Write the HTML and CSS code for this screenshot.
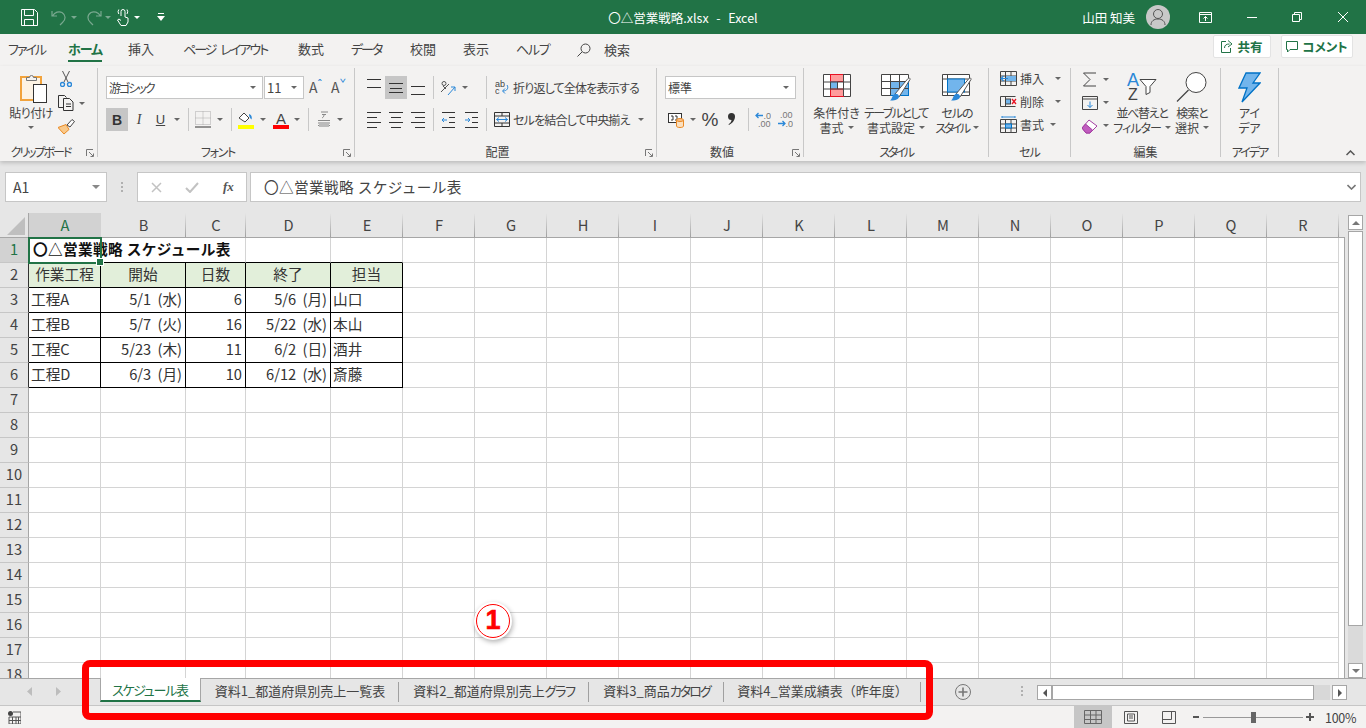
FILE: index.html
```html
<!DOCTYPE html>
<html lang="ja">
<head>
<meta charset="utf-8">
<title>〇△営業戦略.xlsx - Excel</title>
<link rel="stylesheet" href="styles.css">
</head>
<body>
<div class="app">

<header class="title">
  <div class="qat">
    <svg width="17" height="17" viewBox="0 0 17 17" fill="none" stroke="#fff"><path d="M.5.500h13l3 3v13H.5z"/><path d="M3.500.5v6h9v-6M3.500 16.500v-6h9v6"/></svg>
    <svg class="q1" width="17" height="17" viewBox="0 0 17 17" fill="none" stroke="#79a88f" stroke-width="1.200"><path d="M1 2v5h5M1.500 7C4 3 8 2 11 3.500c4 2.500 4 7 .5 10L9 16"/></svg>
    <i class="caret dim q2"></i>
    <svg class="q3" width="17" height="17" viewBox="0 0 17 17" fill="none" stroke="#79a88f" stroke-width="1.200"><path d="M16 2v5h-5M15.500 7C13 3 9 2 6 3.500c-4 2.500-4 7-.5 10L8 16"/></svg>
    <i class="caret dim q2"></i>
    <svg class="q4" width="13" height="18" viewBox="0 0 13 18" fill="none" stroke="#fff"><path d="M5 8V3.500a2 2 0 0 1 4 0V9l3 1v4l-2 3.500H5L1.500 12 3 11l2 1.500"/><path d="M2.800 6a4 4 0 0 1 0-4.500M11 6a4 4 0 0 0 0-4.500"/></svg>
    <i class="caret wh q5"></i>
    <svg class="q6" width="8" height="8" viewBox="0 0 8 8"><path d="M1 0h6v1H1zM0 3h8L4 8z" fill="#fff"/></svg>
  </div>
  <div class="doc">〇△営業戦略.xlsx  -  Excel</div>
  <div class="win">
    <span class="user">山田 知美</span>
    <span class="avatar"><svg width="16" height="18" viewBox="0 0 16 18" fill="none" stroke="#555"><circle cx="8" cy="6" r="4.500"/><path d="M1 17c0-4 3-6 7-6s7 2 7 6"/></svg></span>
    <svg class="w1" width="13" height="11" viewBox="0 0 13 11" fill="none" stroke="#fff"><path d="M.5.500h12v10H.5zM.5 2.500h12M6.500 9V4.500M4.500 6.500l2-2 2 2"/></svg>
    <svg class="w2" width="10" height="1" viewBox="0 0 10 1"><path d="M0 0h10v1H0z" fill="#fff"/></svg>
    <svg class="w3" width="10" height="10" viewBox="0 0 10 10" fill="none" stroke="#fff"><path d="M.5 2.500h7v7h-7zM2.500 2.500v-2h7v7h-2"/></svg>
    <svg class="w4" width="10" height="10" viewBox="0 0 10 10" stroke="#fff"><path d="M0 0l10 10M10 0L0 10"/></svg>
  </div>
</header>

<nav class="tabs">
  <span class="tab t60 ls20">ファイル</span>
  <span class="tab t60 on ls10">ホーム</span>
  <span class="tab t55">挿入</span>
  <span class="tab t115 ls20">ページ レイアウト</span>
  <span class="tab t53">数式</span>
  <span class="tab t59 ls20">データ</span>
  <span class="tab t53">校閲</span>
  <span class="tab t53">表示</span>
  <span class="tab t61 ls13">ヘルプ</span>
  <span class="tab search"><svg width="14" height="14" viewBox="0 0 14 14" fill="none" stroke="#444"><circle cx="8.500" cy="5.500" r="4.500"/><path d="M5 9l-4.500 4.500"/></svg>検索</span>
  <span class="actions">
    <span class="act"><svg width="12" height="13" viewBox="0 0 12 13" fill="none" stroke="#217346"><path d="M5 1.500H.5v11h9V8"/><path d="M3.500 8c0-3 2-4 5-4M7 .5L11 4 7 7"/></svg>共有</span>
    <span class="act a2"><svg width="12" height="12" viewBox="0 0 12 12" fill="none" stroke="#217346"><path d="M.5.500h11v8H4L1.500 11V8.500h-1z"/></svg>コメント</span>
  </span>
</nav>

<section class="ribbon">

  <div class="group g-clip">
    <div class="gbody pad-clip">
      <div class="big w42">
        <div class="bigicon"><svg class="paste" width="28" height="32" viewBox="0 0 28 32"><rect x="1" y="5" width="20" height="23" fill="#fdf3e4" stroke="#f2a33c" stroke-width="2"/><path d="M6.500 8.500v-3h3a2 2 0 0 1 4 0h3v3z" fill="#f3f2f1" stroke="#777"/><rect x="13.500" y="12.500" width="13" height="18" fill="#fff" stroke="#333"/></svg></div>
        <span class="bl ls05">貼り付け</span>
        <span class="bl"><i class="caret"></i></span>
      </div>
      <div class="clipcol">
        <div class="c h16 w16"><svg width="12" height="16" viewBox="0 0 12 16" fill="none"><path d="M2.500 0l5.500 11M9.500 0L4 11" stroke="#555"/><circle cx="2.500" cy="13.500" r="2" stroke="#2b88d8" stroke-width="1.400"/><circle cx="9.500" cy="13.500" r="2" stroke="#2b88d8" stroke-width="1.400"/></svg></div>
        <div class="row h16"><svg width="17" height="16" viewBox="0 0 17 16" fill="none" stroke="#333"><path d="M5.500 12.500H.5V.5h6l2 2"/><path d="M5.500 3.500h6l3.500 3.500v8.500H5.500zM8 9h5M8 11.500h5"/></svg><i class="caret cm"></i></div>
        <div class="row h16"><svg width="17" height="16" viewBox="0 0 17 16"><path d="M0 8.500L8 5.500l3 5-5 4.500z" fill="#f9c98a" stroke="#ea8a24"/><path d="M9 6l5-5.500 2.500 2-4.500 5.500z" fill="#fff" stroke="#444"/></svg></div>
      </div>
    </div>
    <div class="glabel lb"><span class="ls20">クリップボード</span><svg class="launch" width="8" height="8" viewBox="0 0 8 8" fill="none" stroke="#777"><path d="M.5 7V.5H7M3 3l4 4M4.500 7.500h3v-3"/></svg></div>
  </div>

  <div class="group g-font">
    <div class="gbody pad-rows">
      <div class="row h23">
        <div class="sel w157"><span class="jp-y ls20">游ゴシック</span><i class="caret sc"></i></div>
        <div class="sel w40 ml1"><span>11</span><i class="caret sc"></i></div>
        <span class="grow-a ml5">A<sup>ˆ</sup></span>
        <span class="grow-a ml7">A<sup>ˇ</sup></span>
      </div>
      <div class="row h23 mt9">
        <div class="c w22 pressed bold-b">B</div>
        <div class="c w22 ital">I</div>
        <div class="c w21 under">U</div>
        <div class="c w12"><i class="caret"></i></div>
        <div class="vs w10"></div>
        <div class="c w20"><svg width="16" height="17" viewBox="0 0 16 17" fill="none" stroke="#aaa" stroke-dasharray="1 1"><path d="M.5.500h15v13H.5zM8 .5v13M.5 7h15"/><path d="M0 16h16" stroke="#333" stroke-dasharray="none"/></svg></div>
        <div class="c w14"><i class="caret"></i></div>
        <div class="vs w8"></div>
        <div class="c w22"><svg width="16" height="18" viewBox="0 0 16 18"><path d="M1 7l5-5 5 5-4 4z" fill="#fff" stroke="#444"/><path d="M11 3c3 1 3 4 2.500 5.500C12 7 11 6 11 3z" fill="#2b88d8"/><rect y="14" width="16" height="4" fill="#ffff00"/></svg></div>
        <div class="c w12"><i class="caret"></i></div>
        <div class="c w24 font-a">A</div>
        <div class="c w8"><i class="caret"></i></div>
        <div class="vs w14"></div>
        <div class="c w18"><svg width="14" height="17" viewBox="0 0 14 17" fill="none" stroke="#888"><path d="M4 1h7M5 3.500h4M7 3.500c0 2-1 3-2 3.500M1 9.500h12M1 12h12M1 14.500h12"/><rect x="2" y="11" width="10" height="5" fill="#bbb" stroke="none"/></svg></div>
        <div class="c w14"><i class="caret"></i></div>
      </div>
    </div>
    <div class="glabel lb"><span class="ls13">フォント</span><svg class="launch" width="8" height="8" viewBox="0 0 8 8" fill="none" stroke="#777"><path d="M.5 7V.5H7M3 3l4 4M4.500 7.500h3v-3"/></svg></div>
  </div>

  <div class="group g-align">
    <div class="gbody pad-rows">
      <div class="row h23">
        <div class="c w22 at"><svg width="14" height="9" viewBox="0 0 14 9"><path d="M0 0h14v1H0zM0 8h14v1H0z" fill="#333"/></svg></div>
        <div class="c w22 pressed"><svg width="14" height="10" viewBox="0 0 14 10"><path d="M0 0h14v1H0zM1 5h12v1H1zM0 9h14v1H0z" fill="#333"/></svg></div>
        <div class="c w22 ab"><svg width="14" height="9" viewBox="0 0 14 9"><path d="M0 0h14v1H0zM0 8h14v1H0z" fill="#333"/></svg></div>
        <div class="vs w8"></div>
        <div class="c w22"><svg width="16" height="16" viewBox="0 0 16 16" fill="none"><path d="M1 12l8-8M3 6l3 3" stroke="#555"/><circle cx="4" cy="3.500" r="2" stroke="#555"/><path d="M8 15l7-8M11 7h4v4" stroke="#2b88d8"/></svg></div>
        <div class="c w12"><i class="caret"></i></div>
        <div class="w11"></div>
        <div class="vs w8"></div>
        <div class="c w23"><svg width="14" height="15" viewBox="0 0 14 15"><text x="0" y="6.500" class="ti">ab</text><text x="0" y="14" class="ti">c</text><path d="M12 5c2 3 0 6-4 6M10 8.500l-2.500 2.500 2.500 2.500" fill="none" stroke="#2b88d8"/></svg></div>
        <span class="rt ls08">折り返して全体を表示する</span>
      </div>
      <div class="row h23 mt9">
        <div class="c w22"><svg width="14" height="16" viewBox="0 0 14 16"><path d="M0 0h14v1H0zM0 5h10v1H0zM0 10h14v1H0zM0 15h10v1H0z" fill="#333"/></svg></div>
        <div class="c w22"><svg width="14" height="16" viewBox="0 0 14 16"><path d="M0 0h14v1H0zM2 5h10v1H2zM0 10h14v1H0zM2 15h10v1H2z" fill="#333"/></svg></div>
        <div class="c w22"><svg width="14" height="16" viewBox="0 0 14 16"><path d="M0 0h14v1H0zM4 5h10v1H4zM0 10h14v1H0zM4 15h10v1H4z" fill="#333"/></svg></div>
        <div class="vs w8"></div>
        <div class="c w22"><svg width="14" height="16" viewBox="0 0 14 16"><path d="M1 0h13v1H1zM8 5h6v1H8zM8 10h6v1H8zM1 15h13v1H1z" fill="#333"/><path d="M6 8H1M3 6L1 8l2 2" fill="none" stroke="#2b88d8"/></svg></div>
        <div class="c w23"><svg width="14" height="16" viewBox="0 0 14 16"><path d="M1 0h13v1H1zM8 5h6v1H8zM8 10h6v1H8zM1 15h13v1H1z" fill="#333"/><path d="M1 8h5M4 6l2 2-2 2" fill="none" stroke="#2b88d8"/></svg></div>
        <div class="vs w8"></div>
        <div class="c w23"><svg width="16" height="15" viewBox="0 0 16 15" fill="none"><path d="M.5.500h15v14H.5zM.5 4h15M.5 11h15M8 .5V4M8 11v3.500" stroke="#333"/><path d="M2.500 7.500h11M5 5.500l-2.500 2 2.500 2M11 5.500l2.500 2-2.500 2" stroke="#2b88d8"/></svg></div>
        <span class="rt ls08">セルを結合して中央揃え</span>
        <i class="caret ml8"></i>
      </div>
    </div>
    <div class="glabel lb">配置<svg class="launch" width="8" height="8" viewBox="0 0 8 8" fill="none" stroke="#777"><path d="M.5 7V.5H7M3 3l4 4M4.500 7.500h3v-3"/></svg></div>
  </div>

  <div class="group g-num">
    <div class="gbody pad-rows">
      <div class="row h23">
        <div class="sel w131"><span class="jp-y">標準</span><i class="caret sc"></i></div>
      </div>
      <div class="row h23 mt9">
        <div class="c w22"><svg width="17" height="17" viewBox="0 0 17 17"><rect x=".5" y="2.500" width="13" height="9" fill="#fff" stroke="#333"/><path d="M3 5h2v4H3M7 5h2v4H7" fill="none" stroke="#333"/><path d="M8.500 9v6c0 2 7 2 7 0V9" fill="#fbe0c0" stroke="#ea8a24"/><ellipse cx="12" cy="9" rx="3.500" ry="1.500" fill="#f7c08a" stroke="#ea8a24"/></svg></div>
        <div class="c w12"><i class="caret"></i></div>
        <div class="c w22 pct">%</div>
        <div class="c w20"><svg width="9" height="13" viewBox="0 0 9 13"><path d="M1 3.500a3.500 3.500 0 1 1 7 0c0 4-3 7-6 8.500l-.5-.8c2-1.200 3-2.700 3-4.200A3.500 3.500 0 0 1 1 3.500z" fill="#333"/></svg></div>
        <div class="vs w14"></div>
        <div class="c w16"><svg width="16" height="17" viewBox="0 0 16 17"><path d="M8 4.500H1M3.500 2L1 4.500 3.500 7" fill="none" stroke="#2b88d8" stroke-width="1.300"/><text x="8.500" y="8" class="tn">.0</text><text x="3" y="16" class="tn">.00</text></svg></div>
        <div class="w6"></div>
        <div class="c w16"><svg width="16" height="17" viewBox="0 0 16 17"><text x="3" y="7" class="tn">.00</text><path d="M1 12.500h7M5.500 10L8 12.500 5.500 15" fill="none" stroke="#2b88d8" stroke-width="1.300"/><text x="8.500" y="16" class="tn">.0</text></svg></div>
      </div>
    </div>
    <div class="glabel lb">数値<svg class="launch" width="8" height="8" viewBox="0 0 8 8" fill="none" stroke="#777"><path d="M.5 7V.5H7M3 3l4 4M4.500 7.500h3v-3"/></svg></div>
  </div>

  <div class="group g-style">
    <div class="gbody pad-style">
      <div class="big w49">
        <div class="bigicon"><svg class="low" width="28" height="23" viewBox="0 0 28 23" fill="none"><path d="M.5.500h27v22H.5z" fill="#fff" stroke="#444"/><rect x="7.500" y=".5" width="13" height="7" fill="#ff9c9c" stroke="#e81123"/><rect x="7.500" y="7.500" width="7" height="7" fill="#72b5ec"/><rect x="7.500" y="15" width="13" height="7.500" fill="#ff9c9c" stroke="#e81123"/><path d="M7.500 8v7M.5 8h27M.5 15h27M14.500 8v7M20.500 0v22" stroke="#444"/></svg></div>
        <span class="bl">条件付き</span>
        <span class="bl">書式<i class="caret cl"></i></span>
      </div>
      <div class="big w70">
        <div class="bigicon"><svg class="low" width="30" height="27" viewBox="0 0 30 27" fill="none"><path d="M.5.500h27v21H.5z" fill="#fff" stroke="#444"/><rect x="9.500" y="7.500" width="18" height="14" fill="#72b5ec" stroke="#0072c6"/><path d="M.5 7.500h27M.5 14.500h27M9.500.5v21M18.500.5v21" stroke="#444"/><path d="M14 20L27 4.500c1-1 2.500-.2 2 1L18 23z" fill="#fff" stroke="#555"/><path d="M9 26.500c2-1 2-5 4.500-6.500 2-1 4.500.5 4.500 2.500 0 3-5 4.500-9 4z" fill="#2b88d8"/></svg></div>
        <span class="bl ls16">テーブルとして</span>
        <span class="bl">書式設定<i class="caret cl"></i></span>
      </div>
      <div class="big w52">
        <div class="bigicon"><svg class="low" width="30" height="27" viewBox="0 0 30 27" fill="none"><path d="M.5.500h27v21H.5z" fill="#fff" stroke="#444"/><path d="M.5 5h27M.5 18h27M5.500.5v21" stroke="#444"/><rect x="5.500" y="5" width="17" height="13" fill="#72b5ec" stroke="#0072c6"/><path d="M14 20L27 4.500c1-1 2.500-.2 2 1L18 23z" fill="#fff" stroke="#555"/><path d="M9 26.500c2-1 2-5 4.500-6.500 2-1 4.500.5 4.500 2.500 0 3-5 4.500-9 4z" fill="#2b88d8"/></svg></div>
        <span class="bl ls10">セルの</span>
        <span class="bl"><span class="ls25">スタイル</span><i class="caret cl"></i></span>
      </div>
    </div>
    <div class="glabel"><span class="ls25">スタイル</span></div>
  </div>

  <div class="group g-cell">
    <div class="gbody pad-cell">
      <div class="row h23"><svg width="17" height="15" viewBox="0 0 17 15" fill="none"><path d="M.5.500h16v14H.5zM.5 5h16M.5 10h16M5.500.5v14M11 .5v14" stroke="#444"/><rect x="6" y="5" width="10" height="5" fill="#72b5ec"/><path d="M8 7.500H1M3.500 5L1 7.500 3.500 10" stroke="#2b88d8" stroke-width="1.200"/></svg><span class="ct">挿入</span><i class="caret ml6"></i></div>
      <div class="row h23"><svg width="17" height="15" viewBox="0 0 17 15" fill="none"><path d="M.5 2.500h15M.5 12.500h15M5.500 2.500v10M.5 2.500v10" stroke="#444"/><rect x="5.500" y="5" width="5" height="5" fill="#72b5ec" stroke="#444"/><path d="M12 5l4 5M16 5l-4 5" stroke="#e81123" stroke-width="1.300"/></svg><span class="ct">削除</span><i class="caret ml6"></i></div>
      <div class="row h23"><svg width="17" height="17" viewBox="0 0 17 17" fill="none"><path d="M.5 3.500h16v13H.5zM.5 8h16M.5 12h16M5.500 3.500v13M11 3.500v13" stroke="#444"/><rect x="5.500" y="8" width="6" height="4" fill="#72b5ec" stroke="#0072c6"/><path d="M2 1h13M2 0v2M15 0v2" stroke="#2b88d8"/></svg><span class="ct">書式</span><i class="caret ml1"></i></div>
    </div>
    <div class="glabel"><span class="ls10">セル</span></div>
  </div>

  <div class="group g-edit">
    <div class="gbody pad-edit">
      <div class="editcol">
        <div class="row h23"><svg width="16" height="15" viewBox="0 0 16 15" fill="none" stroke="#444"><path d="M14 1H1.500L8 7.500 1.500 14H14"/></svg><i class="caret ml5"></i></div>
        <div class="row h23"><svg width="16" height="16" viewBox="0 0 16 16" fill="none"><path d="M.5 1.500h15v13H.5z" stroke="#444"/><path d="M.5 4h15" stroke="#444"/><path d="M8 6.500v6M5.500 10L8 12.500 10.500 10" stroke="#2b88d8"/></svg><i class="caret ml5"></i></div>
        <div class="row h23"><svg width="16" height="16" viewBox="0 0 16 16"><path d="M0 10l7-8 8 6-7 7H4z" fill="#fff" stroke="#a33ea1"/><path d="M0 10l3.500-4 7 6L8 15H4z" fill="#c15cbf" stroke="#a33ea1"/></svg><i class="caret ml5"></i></div>
      </div>
      <div class="big w56">
        <div class="bigicon"><svg class="sorticon" width="30" height="31" viewBox="0 0 30 31" fill="none"><text x="0" y="14" class="ta">A</text><text x="1" y="28" class="tz">Z</text><path d="M13 7.500h16l-6 7v6l-4 2v-8z" fill="#fff" stroke="#444"/></svg></div>
        <span class="bl ls13">並べ替えと</span>
        <span class="bl"><span class="ls10">フィルター</span><i class="caret cl"></i></span>
      </div>
      <div class="big w44">
        <div class="bigicon"><svg width="32" height="31" viewBox="0 0 32 31" fill="none" stroke="#444"><circle cx="20" cy="10.500" r="10" fill="#fff"/><path d="M12.500 18L1 29.500" stroke-width="1.200"/></svg></div>
        <span class="bl ls10">検索と</span>
        <span class="bl">選択<i class="caret cl"></i></span>
      </div>
    </div>
    <div class="glabel">編集</div>
  </div>

  <div class="group g-idea">
    <div class="gbody pad-idea">
      <div class="big w57">
        <div class="bigicon"><svg width="23" height="31" viewBox="0 0 23 31"><path d="M8 1h14l-7 10h7L4 30l5-14H1z" fill="#72b5ec" stroke="#0072c6" stroke-width="1.300"/></svg></div>
        <span class="bl">アイ</span>
        <span class="bl">デア</span>
      </div>
    </div>
    <div class="glabel"><span class="ls20">アイデア</span></div>
  </div>

  <svg class="collapse" width="9" height="6" viewBox="0 0 9 6" fill="none" stroke="#555" stroke-width="1.500"><path d="M.5 5l4-4 4 4"/></svg>
</section>

<div class="fbar">
  <div class="namebox"><span>A1</span><i class="caret sc big-caret"></i></div>
  <div class="grip"></div>
  <div class="fxbtns">
    <svg width="11" height="11" viewBox="0 0 11 11" stroke="#c2c2c2" stroke-width="1.500"><path d="M1 1l9 9M10 1l-9 9"/></svg>
    <svg width="14" height="11" viewBox="0 0 14 11" fill="none" stroke="#c2c2c2" stroke-width="2"><path d="M1 6l4 4 8-9"/></svg>
    <span class="fx">fx</span>
  </div>
  <div class="formula"><span class="ftext">〇△営業戦略 スケジュール表</span><svg width="9" height="6" viewBox="0 0 9 6" fill="none" stroke="#777" stroke-width="1.600"><path d="M.5 1l4 4 4-4"/></svg></div>
</div>

<main class="sheet">
  <div class="gridwrap">
    <table class="grid">
      <colgroup>
        <col class="c-rh"><col class="c72"><col class="c85"><col class="c60"><col class="c85"><col class="c72">
        <col class="c72"><col class="c72"><col class="c72"><col class="c72"><col class="c72"><col class="c72"><col class="c72"><col class="c72"><col class="c72"><col class="c72"><col class="c72"><col class="c72"><col class="c72"><col class="c-end">
      </colgroup>
      <thead>
        <tr><th class="corner"><svg width="18" height="18" viewBox="0 0 18 18"><path d="M18 0v18H0z" fill="#bfbfbf"/></svg></th><th class="act-h">A</th><th>B</th><th>C</th><th>D</th><th>E</th><th>F</th><th>G</th><th>H</th><th>I</th><th>J</th><th>K</th><th>L</th><th>M</th><th>N</th><th>O</th><th>P</th><th>Q</th><th>R</th><th class="end"></th></tr>
      </thead>
      <tbody>
        <tr><th class="rh act-r">1</th><td class="titlecell" colspan="3"><span class="selbox"></span>〇△営業戦略 スケジュール表</td><td class="bb"></td><td class="bb"></td><td></td><td></td><td></td><td></td><td></td><td></td><td></td><td></td><td></td><td></td><td></td><td></td><td></td><td class="end"></td></tr>
        <tr><th class="rh bk">2</th><td class="bx hd">作業工程</td><td class="bx hd">開始</td><td class="bx hd">日数</td><td class="bx hd">終了</td><td class="bx hd">担当</td><td></td><td></td><td></td><td></td><td></td><td></td><td></td><td></td><td></td><td></td><td></td><td></td><td></td><td class="end"></td></tr>
        <tr><th class="rh bk">3</th><td class="bx">工程A</td><td class="bx num">5/1 (水)</td><td class="bx num">6</td><td class="bx num">5/6 (月)</td><td class="bx">山口</td><td></td><td></td><td></td><td></td><td></td><td></td><td></td><td></td><td></td><td></td><td></td><td></td><td></td><td class="end"></td></tr>
        <tr><th class="rh bk">4</th><td class="bx">工程B</td><td class="bx num">5/7 (火)</td><td class="bx num">16</td><td class="bx num">5/22 (水)</td><td class="bx">本山</td><td></td><td></td><td></td><td></td><td></td><td></td><td></td><td></td><td></td><td></td><td></td><td></td><td></td><td class="end"></td></tr>
        <tr><th class="rh bk">5</th><td class="bx">工程C</td><td class="bx num">5/23 (木)</td><td class="bx num">11</td><td class="bx num">6/2 (日)</td><td class="bx">酒井</td><td></td><td></td><td></td><td></td><td></td><td></td><td></td><td></td><td></td><td></td><td></td><td></td><td></td><td class="end"></td></tr>
        <tr><th class="rh bk">6</th><td class="bx">工程D</td><td class="bx num">6/3 (月)</td><td class="bx num">10</td><td class="bx num">6/12 (水)</td><td class="bx">斎藤</td><td></td><td></td><td></td><td></td><td></td><td></td><td></td><td></td><td></td><td></td><td></td><td></td><td></td><td class="end"></td></tr>
        <tr><th class="rh">7</th><td></td><td></td><td></td><td></td><td></td><td></td><td></td><td></td><td></td><td></td><td></td><td></td><td></td><td></td><td></td><td></td><td></td><td></td><td class="end"></td></tr>
        <tr><th class="rh">8</th><td></td><td></td><td></td><td></td><td></td><td></td><td></td><td></td><td></td><td></td><td></td><td></td><td></td><td></td><td></td><td></td><td></td><td></td><td class="end"></td></tr>
        <tr><th class="rh">9</th><td></td><td></td><td></td><td></td><td></td><td></td><td></td><td></td><td></td><td></td><td></td><td></td><td></td><td></td><td></td><td></td><td></td><td></td><td class="end"></td></tr>
        <tr><th class="rh">10</th><td></td><td></td><td></td><td></td><td></td><td></td><td></td><td></td><td></td><td></td><td></td><td></td><td></td><td></td><td></td><td></td><td></td><td></td><td class="end"></td></tr>
        <tr><th class="rh">11</th><td></td><td></td><td></td><td></td><td></td><td></td><td></td><td></td><td></td><td></td><td></td><td></td><td></td><td></td><td></td><td></td><td></td><td></td><td class="end"></td></tr>
        <tr><th class="rh">12</th><td></td><td></td><td></td><td></td><td></td><td></td><td></td><td></td><td></td><td></td><td></td><td></td><td></td><td></td><td></td><td></td><td></td><td></td><td class="end"></td></tr>
        <tr><th class="rh">13</th><td></td><td></td><td></td><td></td><td></td><td></td><td></td><td></td><td></td><td></td><td></td><td></td><td></td><td></td><td></td><td></td><td></td><td></td><td class="end"></td></tr>
        <tr><th class="rh">14</th><td></td><td></td><td></td><td></td><td></td><td></td><td></td><td></td><td></td><td></td><td></td><td></td><td></td><td></td><td></td><td></td><td></td><td></td><td class="end"></td></tr>
        <tr><th class="rh">15</th><td></td><td></td><td></td><td></td><td></td><td></td><td></td><td></td><td></td><td></td><td></td><td></td><td></td><td></td><td></td><td></td><td></td><td></td><td class="end"></td></tr>
        <tr><th class="rh">16</th><td></td><td></td><td></td><td></td><td></td><td></td><td></td><td></td><td></td><td></td><td></td><td></td><td></td><td></td><td></td><td></td><td></td><td></td><td class="end"></td></tr>
        <tr><th class="rh">17</th><td></td><td></td><td></td><td></td><td></td><td></td><td></td><td></td><td></td><td></td><td></td><td></td><td></td><td></td><td></td><td></td><td></td><td></td><td class="end"></td></tr>
        <tr><th class="rh">18</th><td></td><td></td><td></td><td></td><td></td><td></td><td></td><td></td><td></td><td></td><td></td><td></td><td></td><td></td><td></td><td></td><td></td><td></td><td class="end"></td></tr>
      </tbody>
    </table>
  </div>
  <div class="vscroll">
    <div class="sbtn"><svg width="8" height="4" viewBox="0 0 8 4"><path d="M4 0l4 4H0z" fill="#777"/></svg></div>
    <div class="vthumb"></div>
    <div class="vtrack"></div>
    <div class="sbtn"><svg width="8" height="4" viewBox="0 0 8 4"><path d="M0 0h8L4 4z" fill="#777"/></svg></div>
  </div>
</main>

<div class="tabbar">
  <div class="nav"><svg width="5" height="9" viewBox="0 0 5 9"><path d="M5 0v9L0 4.500z" fill="#bdbdbd"/></svg><svg width="5" height="9" viewBox="0 0 5 9"><path d="M0 0v9l5-4.500z" fill="#bdbdbd"/></svg></div>
  <div class="stab active"><span class="ls13">スケジュール</span>表</div>
  <div class="stab s1">資料1_都道府県別売上一覧表</div>
  <div class="stab s2">資料2_都道府県別売上<span class="ls13">グラフ</span></div>
  <div class="stab s3">資料3_商品<span class="ls20">カタログ</span></div>
  <div class="stab s4">資料4_営業成績表<span class="fullw">（</span>昨年度<span class="fullw">）</span></div>
  <svg class="addsheet" width="16" height="16" viewBox="0 0 16 16" fill="none" stroke="#777"><circle cx="8" cy="8" r="7.500"/><path d="M8 3.500v9M3.500 8h9" stroke-width="1.600"/></svg>
  <div class="grip g2"></div>
  <div class="hscroll">
    <div class="hbtn"><svg width="4" height="8" viewBox="0 0 4 8"><path d="M4 0v8L0 4z" fill="#555"/></svg></div>
    <div class="hthumb"></div>
    <div class="htrack"></div>
    <div class="hbtn"><svg width="4" height="8" viewBox="0 0 4 8"><path d="M0 0v8l4-4z" fill="#555"/></svg></div>
  </div>
</div>

<footer class="status">
  <svg class="macro" width="13" height="13" viewBox="0 0 13 13"><circle cx="2.500" cy="2.500" r="2.500" fill="#444"/><path d="M5 1h8v12H1V6h12M1 9.500h12M4.500 6v7M8 6v7M10.500 6v7" fill="none" stroke="#555"/></svg>
  <div class="views">
    <div class="view on"><svg width="18" height="14" viewBox="0 0 18 14" fill="none" stroke="#666"><path d="M.5.500h17v13H.5zM.5 5h17M.5 9.500h17M6.500.5v13M12 .5v13"/></svg></div>
    <div class="view"><svg width="14" height="13" viewBox="0 0 14 13" fill="none" stroke="#555"><path d="M.5.500h13v12H.5zM3.500 3h7v7h-7zM5 5h4M5 7h4"/></svg></div>
    <div class="view"><svg width="14" height="13" viewBox="0 0 14 13" fill="none" stroke="#555"><path d="M.5.500h13v12H.5zM.5 8.500h9V.5"/></svg></div>
  </div>
  <div class="zoom">
    <svg width="6" height="2" viewBox="0 0 6 2"><path d="M0 0h6v2H0z" fill="#555"/></svg>
    <div class="slider"><span class="knob"></span></div>
    <svg width="8" height="8" viewBox="0 0 8 8"><path d="M3 0h2v3h3v2H5v3H3V5H0V3h3z" fill="#555"/></svg>
    <span class="zv">100%</span>
  </div>
</footer>

<div class="redbox"></div>
<div class="callout"><span>1</span></div>
</div>
</body>
</html>
```

FILE: styles.css
```css
* { box-sizing: border-box; }
html, body { margin: 0; padding: 0; }
body { font-family: "Noto Sans CJK JP", "Noto Sans", sans-serif; color: #444; }
.app { position: relative; width: 1366px; height: 728px; overflow: hidden; display: flex; flex-direction: column; background: #e6e6e6; }
svg { display: block; flex: none; }
i.caret { display: inline-block; flex: none; width: 0; height: 0; border-left: 3px solid transparent; border-right: 3px solid transparent; border-top: 3px solid #666; }

.ls05 { letter-spacing: -.5px; } .ls08 { letter-spacing: -.8px; } .ls10 { letter-spacing: -1px; } .ls13 { letter-spacing: -1.3px; }
.ls16 { letter-spacing: -1.6px; } .ls20 { letter-spacing: -2px; } .ls25 { letter-spacing: -2.5px; }

/* title */
.title { height: 34px; flex: none; background: #217346; color: #fff; display: grid; grid-template-columns: 1fr auto 1fr; align-items: center; font-size: 12.5px; }
.qat { display: flex; align-items: center; padding-left: 21px; }
.q1 { margin-left: 13px; }
.q2 { margin-left: 3px; }
.q3 { margin-left: 8px; }
.q4 { margin-left: 5px; }
.q5 { margin-left: 5px; }
.q6 { margin-left: 17px; }
i.caret.dim { border-top-color: #79a88f; }
i.caret.wh { border-top-color: #fff; }
.doc { white-space: pre; font-feature-settings: "palt"; word-spacing: 1px; }
.win { display: flex; align-items: center; justify-content: flex-end; padding-right: 18px; }
.user { font-size: 12.5px; margin-right: 11px; font-feature-settings: "palt"; }
.avatar { width: 24px; height: 24px; border-radius: 50%; background: #c8c8c8; display: flex; align-items: center; justify-content: center; }
.w1 { margin-left: 29px; }
.w2 { margin-left: 35px; }
.w3 { margin-left: 35px; }
.w4 { margin-left: 36px; }

/* tabs */
.tabs { height: 32px; flex: none; background: #f3f2f1; display: flex; align-items: center; padding-left: 8px; font-size: 13px; font-feature-settings: "palt"; }
.tab { height: 32px; line-height: 30px; position: relative; white-space: nowrap; flex: none; }
.t53 { width: 53px; } .t55 { width: 55px; } .t59 { width: 59px; } .t60 { width: 60px; } .t61 { width: 61px; } .t115 { width: 115px; word-spacing: 4px; }
.tab.on { color: #217346; font-weight: 700; }
.tab.on::after { content: ""; position: absolute; left: 0; width: 34px; bottom: 4px; height: 2px; background: #217346; }
.search { display: flex; align-items: center; gap: 13px; }
.actions { margin-left: auto; margin-right: 13px; display: flex; gap: 10px; }
.act { height: 23px; width: 58px; margin-top: -7px; background: #fff; border: 1px solid #e3e3e3; border-radius: 2px; display: flex; align-items: center; justify-content: center; gap: 4px; color: #217346; font-weight: 700; font-size: 12.5px; }
.act.a2 { width: 72px; }

/* ribbon */
.ribbon { height: 95px; flex: none; background: #f3f2f1; display: flex; position: relative; padding: 2px 0 4px; box-shadow: 0 2px 4px rgba(0,0,0,.18); z-index: 2; font-size: 12px; font-feature-settings: "palt"; }
.group { flex: none; position: relative; border-right: 1px solid #c8c8c8; display: flex; flex-direction: column; height: 89px; }
.g-clip { width: 98px; } .g-font { width: 257px; } .g-align { width: 302px; } .g-num { width: 147px; }
.g-style { width: 185px; } .g-cell { width: 82px; } .g-edit { width: 150px; } .g-idea { width: 58px; }
.gbody { flex: 1; min-height: 0; display: flex; }
.glabel { height: 16px; line-height: 16px; margin-bottom: -3px; text-align: center; flex: none; position: relative; color: #444; }
.glabel.lb { padding-right: 16px; }
.launch { position: absolute; right: 3px; top: 5px; }
.pad-clip { padding: 3px 0 0 10px; }
.pad-rows { padding: 8px 0 0 8px; flex-direction: column; }
.pad-style { padding: 3px 0 0 8px; }
.pad-cell { padding-left: 11px; flex-direction: column; margin-top: -1px; }
.pad-edit { padding: 3px 0 0 11px; }
.editcol { width: 32px; margin-top: -3px; }
.pad-idea { padding-top: 3px; }
.collapse { position: absolute; right: 11px; top: 84px; }

.big { display: flex; flex-direction: column; align-items: center; flex: none; }
.bigicon { height: 34px; display: flex; align-items: flex-start; justify-content: center; flex: none; padding-top: 1px; }
.paste { margin-left: 5px; }
.low { margin-top: 2px; }
.sorticon { overflow: visible; }
.bl { height: 15px; line-height: 15px; white-space: nowrap; display: flex; align-items: center; justify-content: center; }
.w42 { width: 42px; } .w49 { width: 49px; } .w70 { width: 70px; } .w52 { width: 52px; } .w56 { width: 56px; } .w44 { width: 44px; } .w57 { width: 57px; }
.cl { margin-left: 4px; }
.clipcol { margin-left: 6px; display: flex; flex-direction: column; gap: 8px; }
.row { display: flex; align-items: center; flex: none; white-space: nowrap; }
.h16 { height: 16px; } .h23 { height: 23px; }
.mt9 { margin-top: 9px; }
.cm { margin-left: 4px; }
.c { display: flex; align-items: center; justify-content: center; flex: none; height: 23px; }
.c.h16 { height: 16px; }
.w6 { width: 6px; flex: none; } .w8 { width: 8px; } .w10 { width: 10px; } .w11 { width: 11px; flex: none; } .w12 { width: 12px; } .w14 { width: 14px; } .w16 { width: 16px; } .w18 { width: 18px; }
.w20 { width: 20px; } .w21 { width: 21px; } .w22 { width: 22px; } .w23 { width: 23px; } .w24 { width: 24px; }
.w157 { width: 157px; } .w40 { width: 40px; } .w131 { width: 131px; }
.sel { height: 23px; background: #fff; border: 1px solid #c6c6c6; display: flex; align-items: center; justify-content: space-between; padding: 0 6px 0 2px; flex: none; font-size: 13px; }
.jp-y { font-size: 12px; }
.ml1 { margin-left: 1px; } .ml5 { margin-left: 5px; } .ml6 { margin-left: 6px; } .ml7 { margin-left: 7px; } .ml8 { margin-left: 8px; }
.grow-a { font-size: 14px; line-height: 23px; display: flex; width: 15px; color: #555; }
.grow-a sup { font-size: 11px; line-height: 14px; color: #2b88d8; vertical-align: top; margin: 0; }
.pressed { background: #c6c6c6; }
.bold-b { font-weight: 700; font-size: 14px; font-family: "Liberation Sans", sans-serif; color: #333; }
.ital { font-style: italic; font-family: "Liberation Serif", serif; font-size: 14px; }
.under { text-decoration: underline; font-size: 13px; font-family: "Liberation Sans", sans-serif; }
.font-a { font-size: 15px; font-family: "Liberation Sans", sans-serif; position: relative; padding-bottom: 3px; }
.font-a::after { content: ""; position: absolute; left: 4px; right: 4px; bottom: 2px; height: 4px; background: #ff0000; }
.vs { flex: none; height: 23px; display: flex; justify-content: center; }
.vs::before { content: ""; width: 1px; background: #c8c8c8; }
.at { align-items: flex-start; padding-top: 3px; }
.ab { align-items: flex-end; padding-bottom: 4px; }
.rt { white-space: nowrap; color: #444; }
.ti { font: 9px "Liberation Sans", sans-serif; fill: #444; }
.tn { font: 9px "Liberation Sans", sans-serif; fill: #777; }
.ta { font: 18px "Liberation Sans", sans-serif; fill: #2b88d8; }
.tz { font: 16px "Liberation Sans", sans-serif; fill: #444; }
.pct { font-size: 19px; font-family: "Liberation Sans", sans-serif; }
.ct { margin-left: 3px; width: 29px; }

/* formula bar */
.fbar { height: 52px; flex: none; padding: 11px 5px 11px; display: flex; align-items: stretch; background: #e6e6e6; }
.namebox { width: 102px; background: #fff; border: 1px solid #c6c6c6; display: flex; align-items: center; justify-content: space-between; padding: 0 6px 0 7px; font-size: 14px; font-feature-settings: "palt"; }
i.big-caret { border-left-width: 4px; border-right-width: 4px; border-top-width: 4px; border-top-color: #888; }
.grip { width: 2px; height: 10px; margin: 10px 14px 0; background: repeating-linear-gradient(#b0b0b0 0 2px, transparent 2px 4px); flex: none; }
.fxbtns { width: 110px; background: #fff; border: 1px solid #c6c6c6; display: flex; align-items: center; padding-left: 13px; }
.fxbtns svg:nth-child(2) { margin-left: 23px; }
.fx { margin-left: 24px; font: italic 700 13px "Liberation Serif", serif; color: #555; }
.formula { flex: 1; margin-left: 3px; background: #fff; border: 1px solid #c6c6c6; display: flex; align-items: center; justify-content: space-between; padding: 0 4px 0 13px; font-size: 14.67px; letter-spacing: .35px; }
.ftext { margin-top: -2px; }

/* sheet */
.sheet { flex: 1; min-height: 0; display: flex; background: #fff; }
.gridwrap { width: 1345px; flex: none; overflow: hidden; position: relative; }
.grid { table-layout: fixed; width: 1345px; border-collapse: separate; border-spacing: 0; font-size: 14.67px; color: #333; }
.c-rh { width: 29px; } .c72 { width: 72px; } .c85 { width: 85px; } .c60 { width: 60px; } .c-end { width: 6px; }
.grid th, .grid td { height: 25px; padding: 0; white-space: nowrap; overflow: visible; }
.grid thead th { height: 25px; line-height: 24px; font-weight: 400; color: #444; background: linear-gradient(#e6e6e6, #a0a0a0) right / 1px 100% no-repeat #e6e6e6; border-bottom: 1px solid #a6a6a6; }
.grid thead th.corner { position: relative; border-right: 1px solid #a6a6a6; background: #e6e6e6; }
.corner svg { position: absolute; left: 7px; top: 4px; }
.grid thead th.act-h { background: #d2d2d2; color: #217346; }
.grid thead th.end { background: #e6e6e6; }
.grid td { line-height: 22px; border-right: 1px solid #d4d4d4; border-bottom: 1px solid #d4d4d4; padding: 0 0 2px 2px; }
.grid .rh { line-height: 22px; padding-bottom: 2px; background: #e6e6e6; font-weight: 400; border-right: 1px solid #a6a6a6; border-bottom: 1px solid #c6c6c6; color: #444; }
.grid .rh.bk { border-right-color: #333; }
.grid .rh.act-r { background: #d2d2d2; color: #217346; }
.grid td.end { border-right: 1px solid #a6a6a6; border-bottom: 0; padding: 0; }
.grid td.titlecell { font-weight: 700; color: #111; position: relative; padding-left: 4px; border-bottom-color: #000; letter-spacing: .35px; }
.grid td.bb { border-bottom-color: #000; }
.grid td.bx { border-right-color: #000; border-bottom-color: #000; }
.grid td.hd { background: #e2efda; text-align: center; padding: 0 0 2px; }
.grid td.num { text-align: right; padding-right: 3px; word-spacing: 3px; }
.selbox { position: absolute; z-index: 1; left: -1px; top: -1px; width: 74px; height: 27px; border: 2px solid #217346; }
.selbox::after { content: ""; position: absolute; right: -4px; bottom: -4px; width: 6px; height: 6px; background: #217346; border: 1px solid #fff; }

.vscroll { width: 21px; flex: none; background: #e6e6e6; padding: 2px 3px 0; display: flex; flex-direction: column; }
.sbtn { height: 15px; flex: none; background: #fff; border: 1px solid #a6a6a6; display: flex; align-items: center; justify-content: center; }
.vthumb { height: 395px; flex: none; background: #fff; border: 1px solid #a6a6a6; margin-top: 1px; }
.vtrack { flex: 1; background: #dadada; }

/* sheet tabs */
.tabbar { height: 28px; flex: none; background: #e6e6e6; border-top: 1px solid #a6a6a6; border-bottom: 1px solid #c6c6c6; display: flex; align-items: flex-start; position: relative; font-size: 13px; font-feature-settings: "palt"; }
.nav { width: 100px; height: 24px; flex: none; display: flex; align-items: center; gap: 24px; padding-left: 27px; }
.stab { height: 23px; line-height: 23px; text-align: center; white-space: nowrap; position: relative; color: #444; flex: none; }
.s1 { width: 198px; } .s2 { width: 190px; } .s3 { width: 135px; } .s4 { width: 197px; }
.fullw { font-feature-settings: "palt" 0; }
.stab:not(.active)::after { content: ""; position: absolute; right: 0; top: 3px; width: 1px; height: 20px; background: #a0a0a0; }
.stab.active { width: 101px; padding: 0; background: #fff; color: #217346; border-bottom: 2px solid #217346; height: 24px; border-left: 1px solid #a6a6a6; border-right: 1px solid #a6a6a6; margin-top: -1px; }
.addsheet { margin: 5px 0 0 34px; }
.g2 { margin: 7px 14px 0 50px; }
.hscroll { width: 310px; height: 15px; margin: 6px 0 0 0; display: flex; flex: none; }
.hbtn { width: 15px; height: 15px; flex: none; background: #fff; border: 1px solid #a6a6a6; display: flex; align-items: center; justify-content: center; }
.hthumb { width: 262px; flex: none; background: #fff; border: 1px solid #a6a6a6; }
.htrack { flex: 1; background: #d8d8d8; margin-right: 2px; }

/* status */
.status { height: 22px; flex: none; background: #f3f2f1; display: flex; align-items: center; padding-left: 8px; position: relative; }
.views { display: flex; margin-left: 1053px; height: 22px; flex: none; }
.view { width: 38px; height: 22px; display: flex; align-items: center; justify-content: center; }
.view.on { background: #c6c6c6; }
.zoom { display: flex; align-items: center; margin-left: 5px; }
.slider { width: 100px; height: 1px; background: #999; margin: 0 3px 0 4px; position: relative; }
.knob { position: absolute; left: 48px; top: -5px; width: 5px; height: 11px; background: #666; }
.zv { margin-left: 11px; font-size: 12.5px; font-feature-settings: "palt"; letter-spacing: -.3px; }

/* annotations */
.redbox { position: absolute; left: 82px; top: 660px; width: 851px; height: 60px; border: 7px solid #ff0000; border-radius: 8px; z-index: 5; }
.callout { position: absolute; left: 474px; top: 602px; width: 38px; height: 38px; border-radius: 50%; background: #fff; box-shadow: 1px 2px 5px rgba(0,0,0,.3); z-index: 5; display: flex; align-items: center; justify-content: center; }
.callout span { width: 34px; height: 34px; border: 1.5px solid #ff0000; border-radius: 50%; color: #ff0000; font: 700 27px/31px "Liberation Sans", sans-serif; text-align: center; -webkit-text-stroke: .6px #ff0000; }
```
